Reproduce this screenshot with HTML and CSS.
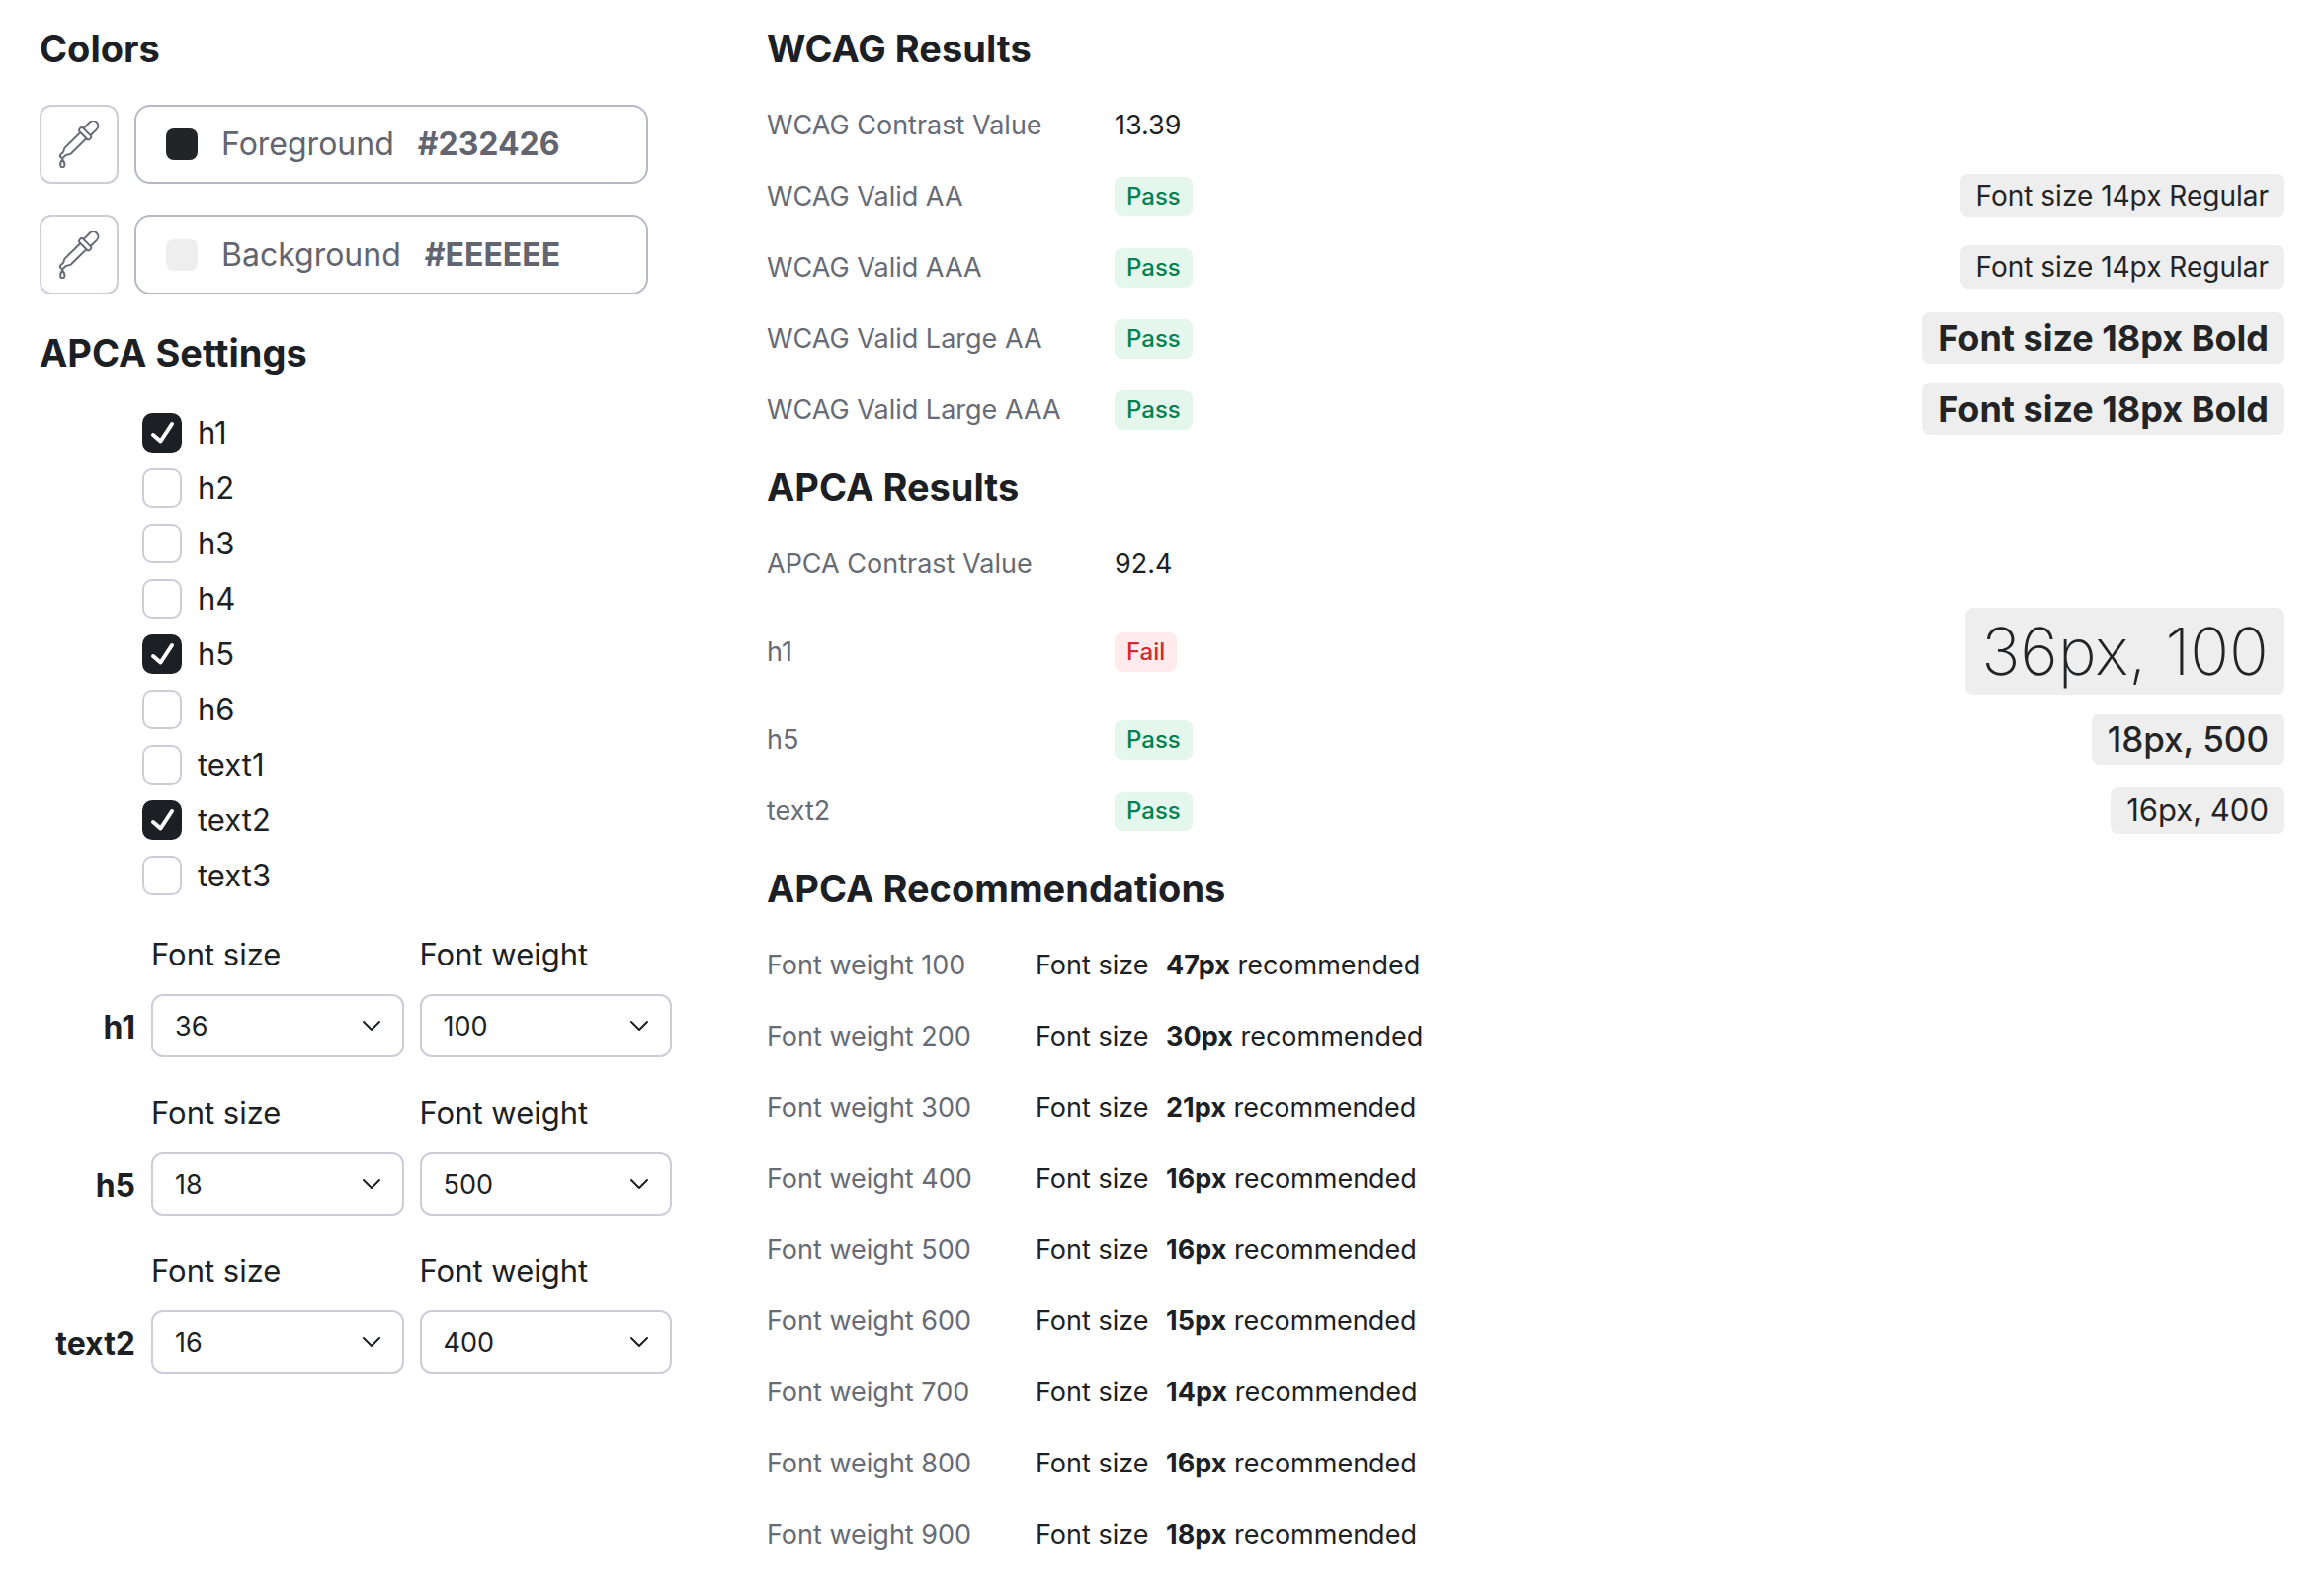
FILE: index.html
```
<!DOCTYPE html>
<html lang="en">
<head>
    <meta charset="UTF-8">
    <meta name="viewport" content="width=device-width, initial-scale=1.0">
    <title>Contrast Checker</title>
    <link rel="stylesheet" href="styles.css">
</head>
<body>
    <!-- Shared dropper icon -->
    <svg class="sprite" aria-hidden="true">
        <symbol id="dropper" viewBox="0 0 48 48">
            <path d="M28.8 7.7 35 1.5C37-.3 40-.1 41.9 1.7c1.9 1.9 2 5 .2 6.9l-6.3 6.2"/>
            <path d="M24.4 8.6 25.6 7.4c.8-.8 1.8-.6 2.6.2l7.5 7.5c.8.8.9 1.8.2 2.6l-1.2 1.2c-.8.8-1.8.6-2.6-.2l-7.5-7.5c-.8-.8-.9-1.8-.2-2.6Z"/>
            <path d="M25.2 12.2 9.8 27.4C8.2 29 9.2 30.4 7.8 32L5.4 34.4c-1.6 1.9 1.2 4.5 3 2.8L10.2 35.4c1.6-1.5 3.6-.3 5.6-2L31.3 18.2"/>
            <path d="M7.2 39.4c-1.3 1.7-2.1 3.4-2.1 5 0 3.8 4.4 3.8 4.4 0 0-1.6-1-3.3-2.3-5Z"/>
        </symbol>
    </svg>

    <main class="page">
        <div class="settings">
            <h2>Colors</h2>
            <div class="colors">
                <div class="color-row">
                    <button class="picker-btn" type="button" aria-label="Pick foreground"><svg><use href="#dropper"/></svg></button>
                    <button class="color-field" type="button">
                        <span class="swatch foreground"></span>
                        <span>Foreground</span>
                        <strong>#232426</strong>
                    </button>
                </div>
                <div class="color-row">
                    <button class="picker-btn" type="button" aria-label="Pick background"><svg><use href="#dropper"/></svg></button>
                    <button class="color-field" type="button">
                        <span class="swatch background"></span>
                        <span>Background</span>
                        <strong>#EEEEEE</strong>
                    </button>
                </div>
            </div>

            <h2>APCA Settings</h2>
            <div class="checks">
                <label><input type="checkbox" checked>h1</label>
                <label><input type="checkbox">h2</label>
                <label><input type="checkbox">h3</label>
                <label><input type="checkbox">h4</label>
                <label><input type="checkbox" checked>h5</label>
                <label><input type="checkbox">h6</label>
                <label><input type="checkbox">text1</label>
                <label><input type="checkbox" checked>text2</label>
                <label><input type="checkbox">text3</label>
            </div>

            <div class="fonts">
                <div class="font-row">
                    <strong class="font-name">h1</strong>
                    <div class="field">
                        <label for="h1-size">Font size</label>
                        <select id="h1-size"><option>36</option></select>
                    </div>
                    <div class="field">
                        <label for="h1-weight">Font weight</label>
                        <select id="h1-weight"><option>100</option></select>
                    </div>
                </div>
                <div class="font-row">
                    <strong class="font-name">h5</strong>
                    <div class="field">
                        <label for="h5-size">Font size</label>
                        <select id="h5-size"><option>18</option></select>
                    </div>
                    <div class="field">
                        <label for="h5-weight">Font weight</label>
                        <select id="h5-weight"><option>500</option></select>
                    </div>
                </div>
                <div class="font-row">
                    <strong class="font-name">text2</strong>
                    <div class="field">
                        <label for="text2-size">Font size</label>
                        <select id="text2-size"><option>16</option></select>
                    </div>
                    <div class="field">
                        <label for="text2-weight">Font weight</label>
                        <select id="text2-weight"><option>400</option></select>
                    </div>
                </div>
            </div>
        </div>

        <div class="results">
            <h2>WCAG Results</h2>
            <table>
                <tr><th scope="row">WCAG Contrast Value</th><td>13.39</td><td></td></tr>
                <tr><th scope="row">WCAG Valid AA</th><td><span class="badge pass">Pass</span></td><td><span class="sample regular">Font size 14px Regular</span></td></tr>
                <tr><th scope="row">WCAG Valid AAA</th><td><span class="badge pass">Pass</span></td><td><span class="sample regular">Font size 14px Regular</span></td></tr>
                <tr><th scope="row">WCAG Valid Large AA</th><td><span class="badge pass">Pass</span></td><td><span class="sample bold">Font size 18px Bold</span></td></tr>
                <tr><th scope="row">WCAG Valid Large AAA</th><td><span class="badge pass">Pass</span></td><td><span class="sample bold">Font size 18px Bold</span></td></tr>
            </table>

            <h2>APCA Results</h2>
            <table>
                <tr><th scope="row">APCA Contrast Value</th><td>92.4</td><td></td></tr>
                <tr><th scope="row">h1</th><td><span class="badge fail">Fail</span></td><td><span class="sample h1">36px, 100</span></td></tr>
                <tr><th scope="row">h5</th><td><span class="badge pass">Pass</span></td><td><span class="sample h5">18px, 500</span></td></tr>
                <tr><th scope="row">text2</th><td><span class="badge pass">Pass</span></td><td><span class="sample text2">16px, 400</span></td></tr>
            </table>

            <h2>APCA Recommendations</h2>
            <table class="recommendations">
                <tr><th scope="row">Font weight 100</th><td>Font size <strong>47px</strong> recommended</td></tr>
                <tr><th scope="row">Font weight 200</th><td>Font size <strong>30px</strong> recommended</td></tr>
                <tr><th scope="row">Font weight 300</th><td>Font size <strong>21px</strong> recommended</td></tr>
                <tr><th scope="row">Font weight 400</th><td>Font size <strong>16px</strong> recommended</td></tr>
                <tr><th scope="row">Font weight 500</th><td>Font size <strong>16px</strong> recommended</td></tr>
                <tr><th scope="row">Font weight 600</th><td>Font size <strong>15px</strong> recommended</td></tr>
                <tr><th scope="row">Font weight 700</th><td>Font size <strong>14px</strong> recommended</td></tr>
                <tr><th scope="row">Font weight 800</th><td>Font size <strong>16px</strong> recommended</td></tr>
                <tr><th scope="row">Font weight 900</th><td>Font size <strong>18px</strong> recommended</td></tr>
            </table>
        </div>
    </main>
</body>
</html>
```

FILE: styles.css
```
* {
    box-sizing: border-box;
}

body {
    margin: 0;
    background-color: #fff;
    color: #1c1f24;
    font-family: Inter, "Liberation Sans", sans-serif;
    font-size: 27px;
    line-height: 36px;
}

button,
select,
input {
    margin: 0;
    font: inherit;
    color: inherit;
}

.sprite {
    display: none;
}

/* Two columns: settings and results */
.page {
    display: grid;
    grid-template-columns: 640px 1fr;
    gap: 96px;
    padding: 6px 40px 26px;
}

h2 {
    margin: 0;
    padding: 17px 0 15px;
    font-size: 38px;
    font-weight: 700;
    line-height: 52px;
}

/* Color pickers */
.colors {
    display: flex;
    flex-direction: column;
    gap: 32px;
    padding: 16px 0;
}

.color-row {
    display: flex;
    gap: 16px;
}

.picker-btn {
    display: flex;
    align-items: center;
    justify-content: center;
    width: 80px;
    height: 80px;
    padding: 0;
    background-color: #fff;
    border: 2px solid #cfccda;
    border-radius: 12px;
    cursor: pointer;
}

.picker-btn svg {
    width: 48px;
    height: 48px;
    overflow: visible;
    fill: none;
    stroke: #676b75;
    stroke-width: 2;
}

.color-field {
    display: flex;
    align-items: center;
    gap: 24px;
    width: 520px;
    height: 80px;
    padding: 0 30px;
    background-color: #fff;
    border: 2px solid #b5b9c6;
    border-radius: 16px;
    color: #62656f;
    font-size: 32px;
    cursor: pointer;
}

.color-field strong {
    font-weight: 700;
}

.swatch {
    width: 32px;
    height: 32px;
    border-radius: 8px;
}

.swatch.foreground {
    background-color: #232426;
}

.swatch.background {
    background-color: #eee;
}

/* Checkbox list */
.checks {
    display: flex;
    flex-direction: column;
    align-items: flex-start;
    gap: 16px;
    padding: 20px 104px 36px;
    font-size: 31px;
    line-height: 40px;
}

.checks label {
    display: flex;
    gap: 16px;
}

.checks input {
    appearance: none;
    width: 40px;
    height: 40px;
    border: 2px solid #cfccda;
    border-radius: 10px;
}

.checks input:checked {
    border: none;
    background: #1c1f24 url("data:image/svg+xml,%3Csvg xmlns='http://www.w3.org/2000/svg' viewBox='0 0 40 40' fill='none' stroke='white' stroke-width='4' stroke-linecap='round' stroke-linejoin='round'%3E%3Cpath d='M11 22l7.5 6.5L30 11'/%3E%3C/svg%3E");
}

/* Font size and weight selects */
.fonts {
    display: flex;
    flex-direction: column;
    gap: 32px;
}

.font-row {
    display: grid;
    grid-template-columns: 97px 1fr 1fr;
    align-items: end;
    gap: 16px;
    font-size: 31px;
    line-height: 48px;
}

.font-name {
    padding-bottom: 6px;
    font-size: 32px;
    font-weight: 700;
    text-align: right;
}

.field {
    display: flex;
    flex-direction: column;
    gap: 16px;
}

select {
    appearance: none;
    width: 100%;
    height: 64px;
    padding: 2px 22px 0;
    border: 2px solid #cfccda;
    border-radius: 12px;
    background: #fff url("data:image/svg+xml,%3Csvg xmlns='http://www.w3.org/2000/svg' viewBox='0 0 20 12' fill='none' stroke='%231c1f24' stroke-width='2' stroke-linecap='round' stroke-linejoin='round'%3E%3Cpath d='M2 2l8 8 8-8'/%3E%3C/svg%3E") no-repeat right 21px center / 20px 12px;
    font-size: 27px;
}

/* Result tables */
table {
    width: 100%;
    border-collapse: collapse;
}

tr {
    height: 72px;
}

th,
td {
    padding: 10px 0 8px;
}

th {
    width: 352px;
    color: #676b75;
    font-weight: 400;
    text-align: left;
}

td:nth-child(3) {
    padding: 9px 0;
    text-align: right;
}

.recommendations th {
    width: 272px;
}

.recommendations strong {
    margin-left: 10px;
    font-weight: 700;
}

.badge {
    display: inline-block;
    vertical-align: middle;
    padding: 4px 12px;
    border-radius: 8px;
    font-size: 24px;
    font-weight: 500;
    line-height: 32px;
}

.badge.pass {
    background-color: #e5f7ec;
    color: #038153;
}

.badge.fail {
    background-color: #ffebec;
    color: #d02a33;
}

/* Text samples in the chosen colors */
.sample {
    display: inline-block;
    vertical-align: middle;
    padding: 4px 16px;
    border-radius: 8px;
    background-color: #eee;
    color: #232426;
}

.sample.regular {
    font-size: 28px;
}

.sample.bold {
    font-size: 36px;
    font-weight: 700;
    line-height: 44px;
}

.sample.h1 {
    font-size: 66px;
    font-weight: 200;
    line-height: 80px;
}

.sample.h5 {
    font-size: 35px;
    font-weight: 500;
    line-height: 44px;
}

.sample.text2 {
    font-size: 31px;
    line-height: 40px;
}

@media (max-width: 1400px) {
    .page {
        grid-template-columns: 1fr;
        gap: 16px;
    }
}
```
